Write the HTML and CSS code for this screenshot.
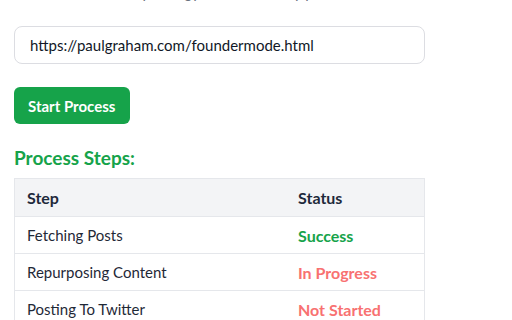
FILE: index.html
```html
<!DOCTYPE html>
<html lang="en">
<head>
    <meta charset="UTF-8">
    <title>Content Repurposer</title>
    <link rel="stylesheet" href="styles.css">
</head>
<body>
    <div class="container">
        <div class="intro">
            <p>Enter a URL, we help energy flow into every post.</p>
        </div>

        <input type="text" class="url-input" value="https://paulgraham.com/foundermode.html">

        <button class="start-btn">Start Process</button>

        <h3 class="steps-title">Process Steps:</h3>

        <table class="steps">
            <thead>
                <tr>
                    <th>Step</th>
                    <th>Status</th>
                </tr>
            </thead>
            <tbody>
                <tr>
                    <td>Fetching Posts</td>
                    <td class="status success">Success</td>
                </tr>
                <tr>
                    <td>Repurposing Content</td>
                    <td class="status pending">In Progress</td>
                </tr>
                <tr>
                    <td>Posting To Twitter</td>
                    <td class="status pending">Not Started</td>
                </tr>
            </tbody>
        </table>
    </div>
</body>
</html>
```

FILE: styles.css
```css
body {
    margin: 0;
    font-family: Lato, "Open Sans", sans-serif;
    background-color: white;
    color: #1f2937;
}

.container {
    width: 411px;
    padding: 0 14px;
}

.intro {
    height: 5px;
    overflow: hidden;
}

.intro p {
    margin: -17px 0 0;
    font-size: 15px;
    line-height: 18px;
    color: #6b7280;
}

.url-input {
    display: block;
    box-sizing: border-box;
    width: 100%;
    height: 38px;
    margin-top: 21px;
    padding: 0 15px;
    border: 1px solid #dcdde2;
    border-radius: 8px;
    font-family: inherit;
    font-size: 15px;
    color: #111827;
}

.start-btn {
    display: block;
    margin-top: 23px;
    height: 37px;
    padding: 0 15px 0 14px;
    background-color: #16a34a;
    color: white;
    border: none;
    border-radius: 6px;
    font-family: inherit;
    font-size: 15px;
    font-weight: 700;
}

.steps-title {
    margin: 22px 0 9px;
    font-size: 19px;
    font-weight: 700;
    color: #16a34a;
}

.steps {
    width: 100%;
    table-layout: fixed;
    border-collapse: collapse;
    border: 1px solid #e5e7eb;
    font-size: 15px;
}

.steps th {
    background-color: #f3f4f6;
    color: #1e293b;
    font-size: 16px;
    font-weight: 700;
    text-align: left;
    height: 37px;
    padding: 0 12px;
}

.steps td {
    height: 36px;
    padding: 0 12px;
    border-top: 1px solid #e5e7eb;
}

.steps th:first-child {
    width: 247px;
}

.status {
    font-size: 16px;
    font-weight: 700;
}

.status.success {
    color: #16a34a;
}

.status.pending {
    color: #f87171;
}
```
